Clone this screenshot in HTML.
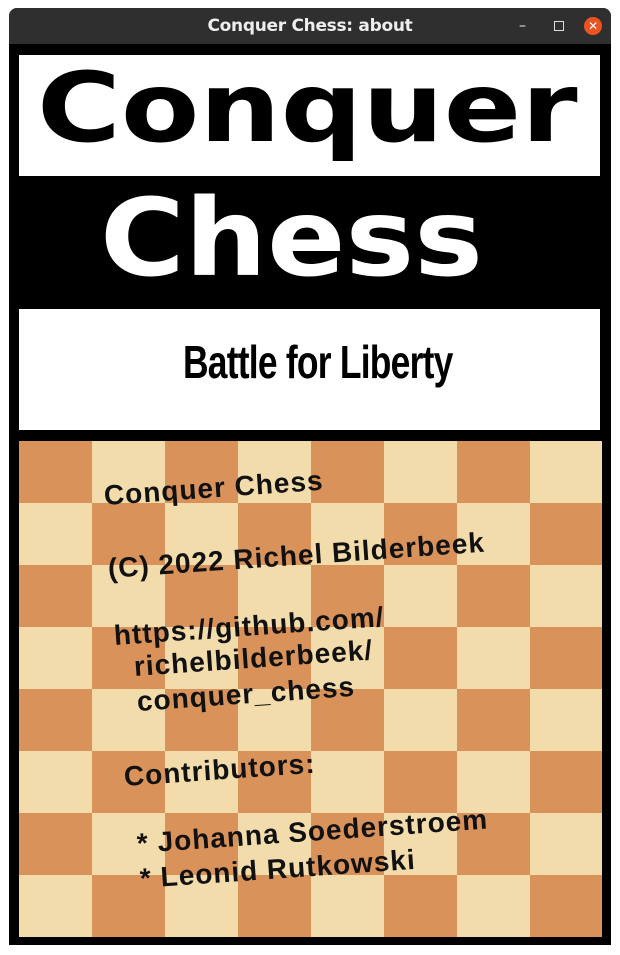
<!DOCTYPE html>
<html><head><meta charset="utf-8"><style>
body{margin:0;width:620px;height:955px;background:#fff;position:relative;overflow:hidden;font-family:"Liberation Sans",sans-serif}
.win{position:absolute;left:9px;top:8px;width:602px;height:937px;background:#000;border-radius:8px 8px 0 0;overflow:hidden}
.tb{position:absolute;left:0;top:0;width:602px;height:36px;background:#2f2f2f;color:#eee;font-weight:bold;font-size:17px;text-align:center;line-height:36px;font-family:"DejaVu Sans","Liberation Sans",sans-serif;letter-spacing:-0.3px}
.box{position:absolute;background:#fff;overflow:hidden}
.big{position:absolute;font-family:"DejaVu Sans",sans-serif;font-weight:900;white-space:nowrap;line-height:1}
.board{position:absolute;left:19px;top:441px;width:583px;height:496px;overflow:hidden;
background-color:#d9935a;
background-image:conic-gradient(#f2dcab 25%,transparent 0 50%,#f2dcab 0 75%,transparent 0);
background-size:146px 124px}
.t{position:absolute;font-size:28px;line-height:30px;font-weight:bold;letter-spacing:1px;color:#111;white-space:nowrap;transform-origin:0 50%;transform:rotate(-4deg)}
</style></head><body>
<div class="win">
<div class="tb">Conquer Chess: about
<span style="position:absolute;left:510px;top:0;font-weight:normal;font-size:14px">–</span>
<span style="position:absolute;left:545px;top:13px;width:8px;height:8px;border:1px solid #ddd"></span>
<span style="position:absolute;left:575px;top:9px;width:18px;height:18px;border-radius:50%;background:#e95420;line-height:18px;font-size:12px;color:#fff;font-weight:normal">✕</span>
</div>
</div>
<div class="box" style="left:19px;top:55px;width:581px;height:121px">
<div class="big" style="left:18px;top:5px;font-size:96px;transform:scaleX(1.19);transform-origin:0 0">Conquer</div>
</div>
<div class="big" style="left:100px;top:186px;font-size:107px;color:#fff;transform:scaleX(1.08);transform-origin:0 0">Chess</div>
<div class="box" style="left:19px;top:309px;width:581px;height:121px">
<div class="big" style="left:164px;top:30px;font-size:46px;font-family:'Liberation Sans Narrow','Liberation Sans',sans-serif;font-weight:bold;transform:scaleX(0.77);transform-origin:0 0;letter-spacing:-1px">Battle for Liberty</div>
</div>
<div class="board"></div>
<div class="t" style="left:104px;top:481px">Conquer Chess</div>
<div class="t" style="left:108px;top:554px">(C) 2022 Richel Bilderbeek</div>
<div class="t" style="left:114px;top:621px">https://github.com/</div>
<div class="t" style="left:134px;top:652px">richelbilderbeek/</div>
<div class="t" style="left:137px;top:687px">conquer_chess</div>
<div class="t" style="left:124px;top:762px">Contributors:</div>
<div class="t" style="left:137px;top:829px">* Johanna Soederstroem</div>
<div class="t" style="left:140px;top:864px">* Leonid Rutkowski</div>
</body></html>
